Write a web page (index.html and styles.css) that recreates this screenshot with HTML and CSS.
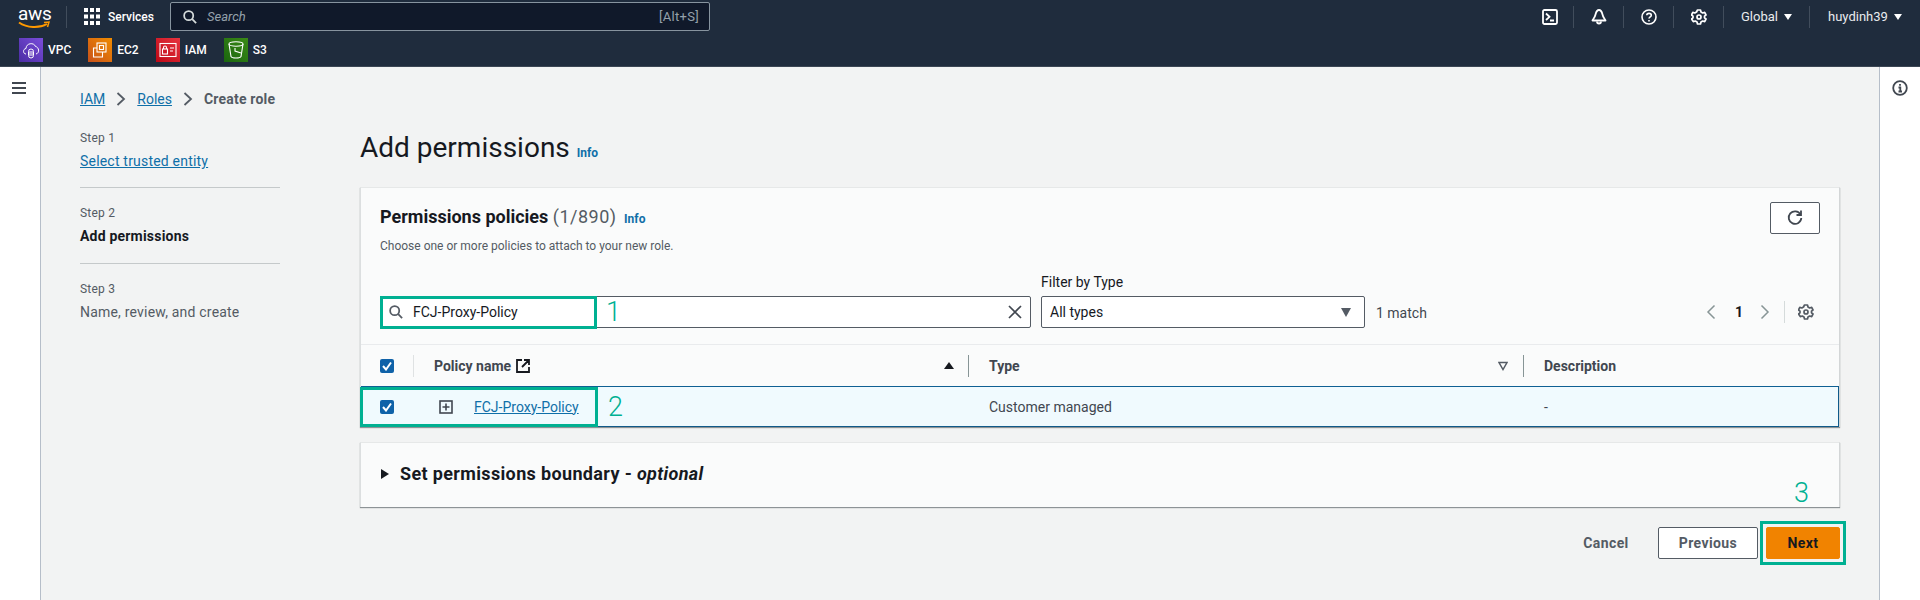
FILE: index.html
```html
<!DOCTYPE html>
<html lang="en">
<head>
  <meta charset="UTF-8">
  <title>Create role</title>
  <link rel="stylesheet" href="styles.css">
</head>
<body>

  <!-- Top navigation -->
  <header class="topbar">
    <div class="topbar-row">
      <div class="aws-logo">
        <span class="aws-word">aws</span>
        <svg class="aws-smile" width="32" height="8" viewBox="0 0 32 8" fill="none">
          <path d="M1 1.5C9 7 21 7.500 29 3" stroke="#f90" stroke-width="2"/>
          <path d="M26 1.500L31 1 29.500 6" stroke="#f90" stroke-width="1.500"/>
        </svg>
      </div>
      <span class="nav-sep nav-sep-logo"></span>
      <svg class="grid-icon" width="16" height="17" viewBox="0 0 16 17" fill="#fff">
        <rect width="4" height="4"/><rect x="6" width="4" height="4"/><rect x="12" width="4" height="4"/>
        <rect y="6.500" width="4" height="4"/><rect x="6" y="6.500" width="4" height="4"/><rect x="12" y="6.500" width="4" height="4"/>
        <rect y="13" width="4" height="4"/><rect x="6" y="13" width="4" height="4"/><rect x="12" y="13" width="4" height="4"/>
      </svg>
      <span class="services">Services</span>
      <div class="global-search">
        <svg width="14" height="14" viewBox="0 0 16 16" fill="none" stroke="#d5dbdb" stroke-width="2">
          <circle cx="6.500" cy="6.500" r="5.200"/><path d="M10.500 10.500L15 15"/>
        </svg>
        <span class="search-hint">Search</span>
        <span class="search-keys">[Alt+S]</span>
      </div>
      <div class="topbar-right">
        <svg class="tool tool-shell" width="16" height="16" viewBox="0 0 16 16" fill="none" stroke="#fff" stroke-width="1.800">
          <rect x="1" y="1" width="14" height="14" rx="1.500"/><path d="M4 4.500L7.500 7.800 4 11M8 11.500H12"/>
        </svg>
        <span class="nav-sep"></span>
        <svg class="tool" width="16" height="17" viewBox="0 0 16 17" fill="none" stroke="#fff" stroke-width="1.800">
          <path d="M8 2C5.500 2 5 4.500 4.500 6.500 4 9 2.500 10.500 1.500 12.500H14.500C13.500 10.500 12 9 11.500 6.500 11 4.500 10.500 2 8 2Z" stroke-linejoin="round"/><path d="M6 13.500a2 2 0 0 0 4 0"/>
        </svg>
        <span class="nav-sep"></span>
        <svg class="tool" width="16" height="16" viewBox="0 0 16 16" fill="none" stroke="#fff" stroke-width="1.600">
          <circle cx="8" cy="8" r="7"/><path d="M5.800 6.200C5.800 3.700 10.300 3.700 10.300 6.200 10.300 7.800 8 7.800 8 9.600"/><path d="M8 11v1.500"/>
        </svg>
        <span class="nav-sep"></span>
        <svg class="tool" width="16" height="16" viewBox="0 0 16 16" fill="none" stroke="#fff" stroke-width="1.700">
          <path d="M6.500 1h3l.5 2 1.700 1 2-.6 1.300 2.600-1.500 1.200v1.600l1.500 1.200-1.300 2.600-2-.6-1.700 1-.5 2h-3l-.5-2-1.700-1-2 .6L.5 10l1.500-1.200V7.200L.5 6l1.300-2.600 2 .6L5.500 3z" stroke-linejoin="round"/>
          <circle cx="8" cy="8" r="2"/>
        </svg>
        <span class="nav-sep"></span>
        <span class="nav-menu nav-region">Global <i class="caret"></i></span>
        <span class="nav-sep"></span>
        <span class="nav-menu nav-user">huydinh39 <i class="caret"></i></span>
      </div>
    </div>
    <div class="favorites">
      <span class="fav">
        <span class="fav-icon fav-vpc">
          <svg width="18" height="20" viewBox="0 0 18 20" fill="none" stroke="#fff" stroke-width="1">
            <path d="M4 14C1 14 .5 9 4 8.500 4 3 12 2 13.500 6.500 17 7 18 13 14 14"/>
            <rect x="6.500" y="9" width="5" height="9" rx="2.500"/><path d="M8 11v5M10 11v5"/>
          </svg>
        </span>VPC
      </span>
      <span class="fav">
        <span class="fav-icon fav-ec2">
          <svg width="18" height="20" viewBox="0 0 18 20" fill="none" stroke="#fff" stroke-width="1.100">
            <rect x="6" y="3" width="9" height="9"/><rect x="8.500" y="5.500" width="4" height="4"/>
            <path d="M6 8H2.500V17H11.500V12"/>
          </svg>
        </span>EC2
      </span>
      <span class="fav">
        <span class="fav-icon fav-iam">
          <svg width="18" height="16" viewBox="0 0 18 16" fill="none" stroke="#fff" stroke-width="1.100">
            <rect x="1" y="1.500" width="16" height="13"/><rect x="3.500" y="7" width="5" height="5"/>
            <path d="M4.500 7V5.500a1.500 1.500 0 0 1 3 0V7M11 6h4M11 9h3"/>
          </svg>
        </span>IAM
      </span>
      <span class="fav">
        <span class="fav-icon fav-s3">
          <svg width="18" height="20" viewBox="0 0 18 20" fill="none" stroke="#fff" stroke-width="1.100">
            <ellipse cx="9" cy="4" rx="7" ry="2.200"/><path d="M2 4L4 16.500C5 18.500 13 18.500 14 16.500L16 4"/><path d="M8 8V11L14 13"/>
          </svg>
        </span>S3
      </span>
    </div>
  </header>

  <div class="layout">
    <aside class="rail rail-left">
      <svg width="14" height="12" viewBox="0 0 14 12" fill="#414750">
        <rect width="14" height="2"/><rect y="5" width="14" height="2"/><rect y="10" width="14" height="2"/>
      </svg>
    </aside>

    <main class="content">
      <nav class="breadcrumb">
        <a href="#">IAM</a>
        <svg width="10" height="16" viewBox="0 0 10 16" fill="none" stroke="#545b64" stroke-width="1.800"><path d="M1.500 2L8 8 1.500 14"/></svg>
        <a href="#">Roles</a>
        <svg width="10" height="16" viewBox="0 0 10 16" fill="none" stroke="#545b64" stroke-width="1.800"><path d="M1.500 2L8 8 1.500 14"/></svg>
        <span class="crumb-current">Create role</span>
      </nav>

      <div class="wizard">
        <!-- Steps -->
        <ol class="steps">
          <li class="step">
            <small>Step 1</small>
            <a href="#">Select trusted entity</a>
          </li>
          <li class="step">
            <small>Step 2</small>
            <strong>Add permissions</strong>
          </li>
          <li class="step">
            <small>Step 3</small>
            <span class="step-todo">Name, review, and create</span>
          </li>
        </ol>

        <section class="form">
          <h1>Add permissions <a class="info" href="#">Info</a></h1>

          <div class="card card-policies">
            <div class="card-head">
              <div class="card-titles">
                <h2>Permissions policies <span class="count">(1/890)</span> <a class="info" href="#">Info</a></h2>
                <p>Choose one or more policies to attach to your new role.</p>
              </div>
              <button class="btn refresh" type="button">
                <svg width="16" height="16" viewBox="0 0 16 16" fill="none" stroke="#414750" stroke-width="1.800">
                  <path d="M13.500 4.500A6.300 6.300 0 1 0 14.300 8"/><path d="M14 .5V5H9.500"/>
                </svg>
              </button>
            </div>

            <div class="filters">
              <div class="text-filter">
                <svg width="14" height="14" viewBox="0 0 16 16" fill="none" stroke="#545b64" stroke-width="2">
                  <circle cx="6.500" cy="6.500" r="5.200"/><path d="M10.500 10.500L15 15"/>
                </svg>
                <span class="filter-value">FCJ-Proxy-Policy</span>
                <svg class="clear" width="14" height="14" viewBox="0 0 14 14" fill="none" stroke="#414750" stroke-width="1.700"><path d="M1 1L13 13M13 1L1 13"/></svg>
              </div>
              <div class="type-filter">
                <label>Filter by Type</label>
                <div class="select">All types <i class="select-caret"></i></div>
              </div>
              <span class="matches">1 match</span>
              <div class="pager">
                <svg width="10" height="16" viewBox="0 0 10 16" fill="none" stroke="#879596" stroke-width="1.500"><path d="M8.500 1.500L2 8 8.500 14.500"/></svg>
                <b>1</b>
                <svg width="10" height="16" viewBox="0 0 10 16" fill="none" stroke="#879596" stroke-width="1.500"><path d="M1.500 1.500L8 8 1.500 14.500"/></svg>
                <span class="pager-sep"></span>
                <svg width="16" height="16" viewBox="0 0 16 16" fill="none" stroke="#545b64" stroke-width="1.700">
                  <path d="M6.500 1h3l.5 2 1.700 1 2-.6 1.300 2.600-1.500 1.200v1.600l1.500 1.200-1.300 2.600-2-.6-1.700 1-.5 2h-3l-.5-2-1.700-1-2 .6L.5 10l1.500-1.200V7.200L.5 6l1.300-2.600 2 .6L5.500 3z" stroke-linejoin="round"/>
                  <circle cx="8" cy="8" r="2"/>
                </svg>
              </div>
            </div>

            <table class="policies">
              <colgroup>
                <col class="col-check"><col class="col-name"><col class="col-type"><col>
              </colgroup>
              <thead>
                <tr>
                  <th>
                    <div class="th-inner th-check">
                      <span class="checkbox"><svg width="10" height="10" viewBox="0 0 10 10" fill="none" stroke="#fff" stroke-width="2"><path d="M1 5L4 8.500 9 1.500"/></svg></span>
                    </div>
                  </th>
                  <th>
                    <div class="th-inner">
                      <span class="th-label">Policy name
                        <svg width="14" height="14" viewBox="0 0 14 14" fill="none" stroke="#16191f" stroke-width="1.800"><path d="M6 1H1V13H13V8M8 1H13V6M13 1L6 8"/></svg>
                      </span>
                      <i class="sort-up"></i>
                    </div>
                  </th>
                  <th>
                    <div class="th-inner">
                      <span class="th-label">Type</span>
                      <svg class="sort-none" width="10" height="10" viewBox="0 0 10 10" fill="none" stroke="#545b64" stroke-width="1.500"><path d="M1 1.500H9L5 8.500Z"/></svg>
                    </div>
                  </th>
                  <th><div class="th-inner th-last"><span class="th-label">Description</span></div></th>
                </tr>
              </thead>
              <tbody>
                <tr class="selected">
                  <td>
                    <span class="checkbox"><svg width="10" height="10" viewBox="0 0 10 10" fill="none" stroke="#fff" stroke-width="2"><path d="M1 5L4 8.500 9 1.500"/></svg></span>
                  </td>
                  <td>
                    <div class="name-cell">
                      <svg width="14" height="14" viewBox="0 0 14 14" fill="none" stroke="#414750" stroke-width="1.600"><rect x="1" y="1" width="12" height="12"/><path d="M7 3.500V10.500M3.500 7H10.500"/></svg>
                      <a href="#">FCJ-Proxy-Policy</a>
                    </div>
                  </td>
                  <td>Customer managed</td>
                  <td>-</td>
                </tr>
              </tbody>
            </table>
          </div>

          <div class="card card-boundary">
            <i class="expand"></i>
            <h2>Set permissions boundary - <em>optional</em></h2>
          </div>

          <div class="actions">
            <button class="btn-link" type="button">Cancel</button>
            <button class="btn" type="button">Previous</button>
            <button class="btn btn-primary" type="button">Next</button>
          </div>
        </section>
      </div>
    </main>

    <aside class="rail rail-right">
      <svg width="16" height="16" viewBox="0 0 16 16" fill="none" stroke="#414750" stroke-width="1.800">
        <circle cx="8" cy="8" r="6.800"/><path d="M6.500 7.500H8.300V11.500M6.500 11.500H10M8 4v1.800"/>
      </svg>
    </aside>
  </div>

  <!-- Tutorial marks drawn on top of the screenshot -->
  <div class="mark mark-search"></div>
  <div class="mark mark-row"></div>
  <div class="mark mark-next"></div>
  <span class="mark-num num-1">1</span>
  <span class="mark-num num-2">2</span>
  <span class="mark-num num-3">3</span>

</body>
</html>
```

FILE: styles.css
```css
* {
  box-sizing: border-box;
}

html, body {
  height: 600px;
  overflow: hidden;
}

body {
  position: relative;
  margin: 0;
  font-family: Roboto, "Noto Sans", sans-serif;
  font-size: 14px;
  color: #16191f;
  background-color: #fff;
}

a {
  color: #0f6fa8;
}

/* Top navigation */
.topbar {
  height: 67px;
  background-color: #1f2c3d;
  color: #fff;
  border-bottom: 1px solid #3b4654;
}

.topbar-row {
  height: 33px;
  display: flex;
  align-items: center;
}

.aws-logo {
  position: relative;
  width: 32px;
  height: 24px;
  margin-left: 18px;
}

.aws-word {
  display: block;
  font-size: 19px;
  line-height: 18px;
  letter-spacing: -0.3px;
  text-align: center;
}

.aws-smile {
  position: absolute;
  left: 0;
  top: 16px;
}

.nav-sep {
  width: 1px;
  height: 22px;
  background-color: #414d5c;
}

.nav-sep-logo {
  margin-left: 16px;
  margin-right: 17px;
}

.services {
  width: 44px;
  margin-left: 8px;
  flex: none;
  font-size: 12px;
  font-weight: 500;
}

.global-search {
  width: 540px;
  height: 29px;
  margin-left: 18px;
  padding: 0 10px 0 12px;
  display: flex;
  align-items: center;
  background-color: #10192a;
  border: 1px solid #87949f;
  border-radius: 2px;
  color: #95a1ab;
  font-size: 13px;
}

.search-hint {
  margin-left: 10px;
  font-style: italic;
}

.search-keys {
  margin-left: auto;
  letter-spacing: 0.3px;
}

.topbar-right {
  margin-left: auto;
  display: flex;
  align-items: center;
}

.tool {
  margin: 0 16.500px;
}

.tool-shell {
  margin: 0 15px 0 0;
}

.nav-menu {
  display: flex;
  align-items: center;
  gap: 6px;
  font-size: 13px;
  color: #e9ebed;
}

.nav-region {
  width: 85px;
  padding-left: 17px;
}

.nav-user {
  width: 110px;
  padding-left: 18px;
}

.caret {
  width: 0;
  height: 0;
  border-left: 4px solid transparent;
  border-right: 4px solid transparent;
  border-top: 6px solid #fff;
}

.favorites {
  height: 33px;
  padding-left: 19px;
  display: flex;
  align-items: center;
  gap: 17px;
}

.fav {
  display: flex;
  align-items: center;
  gap: 5px;
  font-size: 12px;
  font-weight: 500;
}

.fav-icon {
  width: 24px;
  height: 24px;
  display: flex;
  align-items: center;
  justify-content: center;
}

.fav-vpc { background: linear-gradient(45deg, #4b2da3, #7a4ddb); }
.fav-ec2 { background: linear-gradient(45deg, #c8511b, #f08c00); }
.fav-iam { background: linear-gradient(45deg, #bd0816, #e8343f); }
.fav-s3 { background: linear-gradient(45deg, #1b660f, #3a8a16); }

/* Page frame */
.layout {
  height: 533px;
  display: flex;
}

.rail {
  flex: none;
  background-color: #fff;
  display: flex;
  justify-content: center;
}

.rail-left {
  width: 41px;
  padding: 15px 3px 0 0;
  border-right: 1px solid #b6bec9;
}

.rail-right {
  width: 41px;
  padding: 13px 0 0 0;
  border-left: 1px solid #b6bec9;
}

.rail svg {
  flex: none;
}

.content {
  flex: 1;
  min-width: 0;
  padding: 22px 39px 0;
  background-color: #f2f3f3;
}

.breadcrumb {
  height: 20px;
  display: flex;
  align-items: center;
  gap: 11px;
}

.crumb-current {
  font-weight: 700;
  color: #545b64;
  font-size: 14px;
  letter-spacing: 0.2px;
}

.wizard {
  display: flex;
  gap: 80px;
  margin-top: 18px;
}

/* Steps */
.steps {
  list-style: none;
  width: 200px;
  flex: none;
  margin: 0;
  padding: 2px 0 0;
}

.step {
  display: flex;
  flex-direction: column;
  align-items: flex-start;
  height: 76px;
  border-bottom: 1px solid #c5c9ca;
  line-height: 18px;
  letter-spacing: 0.2px;
}

.step + .step {
  padding-top: 16px;
}

.step:first-child {
  height: 59px;
}

.step:last-child {
  border-bottom: 0;
}

.step small {
  font-size: 12px;
  color: #545b64;
  margin-bottom: 5px;
}

.step-todo {
  color: #545b64;
}

/* Main form */
.form {
  flex: 1;
  min-width: 0;
}

h1 {
  height: 40px;
  margin: 0 0 20px;
  padding-top: 1px;
  font-size: 28px;
  font-weight: 400;
  line-height: 40px;
}

.info {
  font-size: 12px;
  font-weight: 700;
  letter-spacing: 0;
  text-decoration: none;
}

h2 .info {
  margin-left: 3px;
}

.card {
  background-color: #fafbfb;
  border-top: 1px solid #e6e8e8;
  border-left: 1px solid #dcdfe0;
  border-right: 1px solid #d3d6d7;
  box-shadow: 0 1px 1px #8d9396;
}

.card-policies {
  height: 240px;
}

.card-head {
  display: flex;
  justify-content: space-between;
  align-items: flex-start;
  padding: 14px 19px 0;
}

.card-titles {
  padding-top: 3px;
}

h2 {
  margin: 0;
  font-size: 18px;
  font-weight: 700;
  line-height: 24px;
}

.count {
  font-weight: 400;
  color: #545b64;
  letter-spacing: 0.5px;
}

.card-titles p {
  margin: 7px 0 0;
  font-size: 12px;
  line-height: 16px;
  color: #545b64;
}

/* Buttons */
.btn {
  width: 100px;
  height: 32px;
  padding: 0;
  font-family: inherit;
  font-size: 14px;
  font-weight: 700;
  letter-spacing: 0.4px;
  color: #545b64;
  background-color: #fff;
  border: 1px solid #545b64;
  border-radius: 2px;
}

.refresh {
  width: 50px;
  display: flex;
  align-items: center;
  justify-content: center;
}

.btn-primary {
  width: 74px;
  margin-left: -2px;
  color: #16191f;
  background-color: #f18300;
  border-color: #f18300;
}

.btn-link {
  width: 84px;
  height: 32px;
  padding: 0;
  font-family: inherit;
  font-size: 14px;
  font-weight: 700;
  letter-spacing: 0.4px;
  color: #545b64;
  background: none;
  border: 0;
}

/* Filters */
.filters {
  display: flex;
  align-items: flex-end;
  padding: 19px 19px 16px;
}

.text-filter {
  width: 651px;
  height: 32px;
  padding: 0 8px 0 8px;
  display: flex;
  align-items: center;
  gap: 10px;
  background-color: #fff;
  border: 1px solid #545b64;
  border-radius: 2px;
}

.clear {
  margin-left: auto;
}

.type-filter {
  width: 324px;
  margin-left: 10px;
}

.type-filter label {
  display: block;
  margin-bottom: 5px;
  line-height: 18px;
}

.select {
  height: 32px;
  padding: 0 13px 0 8px;
  display: flex;
  align-items: center;
  justify-content: space-between;
  background-color: #fff;
  border: 1px solid #545b64;
  border-radius: 2px;
}

.select-caret {
  width: 0;
  height: 0;
  border-left: 5px solid transparent;
  border-right: 5px solid transparent;
  border-top: 9px solid #545b64;
}

.matches {
  margin-left: 11px;
  height: 32px;
  line-height: 34px;
  color: #414750;
}

.pager {
  margin-left: auto;
  height: 32px;
  display: flex;
  align-items: center;
  gap: 14px;
  padding-right: 6px;
}

.pager b {
  margin: 0 3px 0 5px;
  font-weight: 700;
}

.pager-sep {
  width: 1px;
  height: 22px;
  margin-right: -1px;
  background-color: #d5dbdb;
}

/* Table */
.policies {
  width: 100%;
  table-layout: fixed;
  border-collapse: collapse;
}

.col-check {
  width: 53px;
}

.col-name,
.col-type {
  width: 555px;
}

.policies thead tr {
  height: 42px;
  border-top: 1px solid #e9ebed;
}

.policies th {
  padding: 0;
  text-align: left;
  font-weight: 700;
  color: #414750;
}

.th-inner {
  height: 22px;
  padding: 0 14px 0 20px;
  display: flex;
  align-items: center;
  justify-content: space-between;
  border-right: 1px solid #879596;
}

.th-check {
  padding-left: 19px;
  border-right-color: #dfe2e3;
}

.th-last {
  border-right: 0;
}

.th-label {
  display: flex;
  align-items: center;
  gap: 5px;
}

.sort-up {
  width: 0;
  height: 0;
  border-left: 5px solid transparent;
  border-right: 5px solid transparent;
  border-bottom: 7px solid #16191f;
}

.sort-none {
  margin-right: 1px;
}

.checkbox {
  width: 14px;
  height: 14px;
  display: flex;
  align-items: center;
  justify-content: center;
  background-color: #0f62a8;
  border-radius: 2px;
}

.selected {
  height: 40px;
  background-color: #f0fafe;
  border-top: 1px solid #0f6093;
  border-bottom: 1px solid #0f5a8a;
  border-right: 1px solid #0f5a8a;
}

.selected td {
  padding: 0 0 0 20px;
  color: #414750;
}

.selected td:first-child {
  padding-left: 19px;
}

.name-cell {
  margin-left: 5px;
  display: flex;
  align-items: center;
  gap: 21px;
}

.card-boundary {
  height: 65px;
  margin-top: 15px;
  padding: 0 19px 3px;
  display: flex;
  align-items: center;
  gap: 11px;
}

.card-boundary h2 {
  letter-spacing: 0.35px;
}

.card-boundary em {
  font-weight: 700;
}

.expand {
  width: 0;
  height: 0;
  margin-left: 1px;
  border-top: 5px solid transparent;
  border-bottom: 5px solid transparent;
  border-left: 8px solid #16191f;
}

.actions {
  margin-top: 20px;
  display: flex;
  justify-content: flex-end;
  gap: 10px;
}

/* Tutorial marks */
.mark {
  position: absolute;
  border: 3px solid #00b092;
}

.mark-search {
  left: 380px;
  top: 296px;
  width: 217px;
  height: 33px;
}

.mark-row {
  left: 360px;
  top: 387px;
  width: 238px;
  height: 40px;
}

.mark-next {
  left: 1760px;
  top: 521px;
  width: 86px;
  height: 44px;
}

.mark-num {
  position: absolute;
  font-size: 27px;
  font-weight: 300;
  line-height: 30px;
  color: #00b092;
}

.num-1 {
  left: 606px;
  top: 297px;
}

.num-2 {
  left: 608px;
  top: 392px;
}

.num-3 {
  left: 1794px;
  top: 478px;
}
```
